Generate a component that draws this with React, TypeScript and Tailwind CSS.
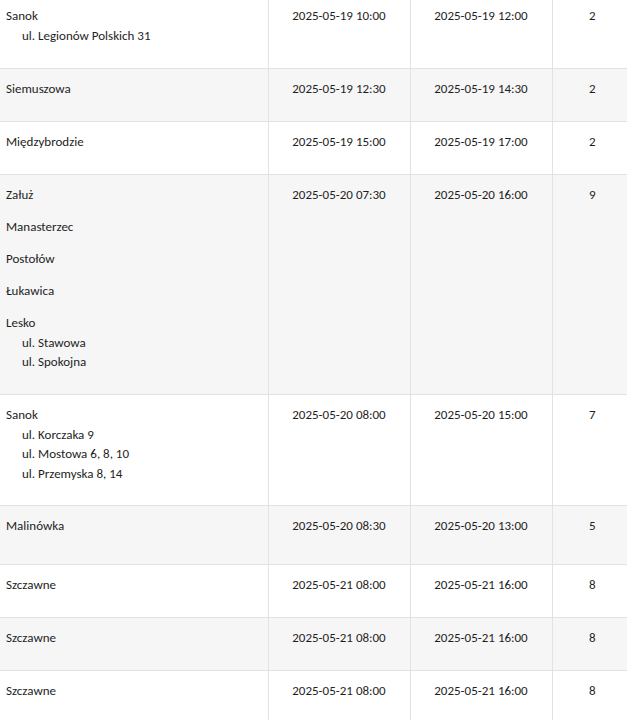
type Row = {
  places: { name: string; streets?: string[] }[];
  from: string;
  to: string;
  count: number;
  tall?: boolean;
};

const rows: Row[] = [
  { places: [{ name: "Sanok", streets: ["ul. Legionów Polskich 31"] }], from: "2025-05-19 10:00", to: "2025-05-19 12:00", count: 2 },
  { places: [{ name: "Siemuszowa" }], from: "2025-05-19 12:30", to: "2025-05-19 14:30", count: 2 },
  { places: [{ name: "Międzybrodzie" }], from: "2025-05-19 15:00", to: "2025-05-19 17:00", count: 2 },
  {
    places: [
      { name: "Załuż" },
      { name: "Manasterzec" },
      { name: "Postołów" },
      { name: "Łukawica" },
      { name: "Lesko", streets: ["ul. Stawowa", "ul. Spokojna"] },
    ],
    from: "2025-05-20 07:30",
    to: "2025-05-20 16:00",
    count: 9,
  },
  {
    places: [{ name: "Sanok", streets: ["ul. Korczaka 9", "ul. Mostowa 6, 8, 10", "ul. Przemyska 8, 14"] }],
    from: "2025-05-20 08:00",
    to: "2025-05-20 15:00",
    count: 7,
  },
  { places: [{ name: "Malinówka" }], from: "2025-05-20 08:30", to: "2025-05-20 13:00", count: 5, tall: true },
  { places: [{ name: "Szczawne" }], from: "2025-05-21 08:00", to: "2025-05-21 16:00", count: 8 },
  { places: [{ name: "Szczawne" }], from: "2025-05-21 08:00", to: "2025-05-21 16:00", count: 8 },
  { places: [{ name: "Szczawne" }], from: "2025-05-21 08:00", to: "2025-05-21 16:00", count: 8 },
];

export default function App() {
  return (
    <div className="w-[627px] h-[720px] overflow-hidden bg-white text-[#1e1e1e] text-[13px] leading-5 font-['Calibri','Carlito','Lato',sans-serif]">
      <table className="-mt-1 w-[632px] table-fixed border-collapse">
        <colgroup>
          <col className="w-[268px]" />
          <col className="w-[142px]" />
          <col className="w-[142px]" />
          <col className="w-[80px]" />
        </colgroup>
        <tbody>
          {rows.map((r, i) => (
            <tr
              key={i}
              className={`border-b border-[#e2e2e2] ${i % 2 === 1 ? "bg-[#f6f6f6]" : "bg-white"} ${r.tall ? "h-[59px]" : ""}`}
            >
              <td className="align-top px-1.5 pt-2.5 pb-2.5">
                {r.places.map((p, j) => (
                  <div key={j} className="mb-3">
                    <div>{p.name}</div>
                    {p.streets?.map((s) => (
                      <div key={s} className="pl-4 leading-[19.5px]">
                        {s}
                      </div>
                    ))}
                  </div>
                ))}
              </td>
              <td className="align-top text-center border-l border-[#e2e2e2] pt-2.5 pb-2.5">
                <div className="mb-3">{r.from}</div>
              </td>
              <td className="align-top text-center border-l border-[#e2e2e2] pt-2.5 pb-2.5">
                <div className="mb-3">{r.to}</div>
              </td>
              <td className="align-top text-center border-l border-[#e2e2e2] pt-2.5 pb-2.5">
                <div className="mb-3">{r.count}</div>
              </td>
            </tr>
          ))}
        </tbody>
      </table>
    </div>
  );
}
